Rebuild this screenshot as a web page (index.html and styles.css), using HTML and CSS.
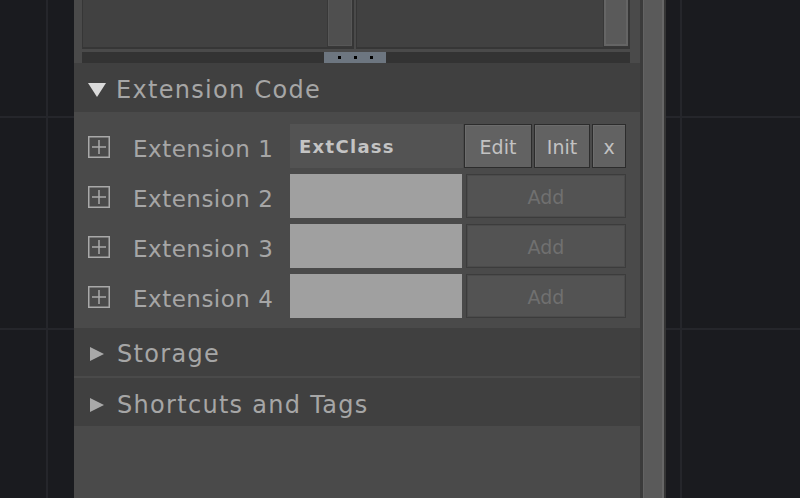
FILE: index.html
```html
<!DOCTYPE html>
<html lang="en">
<head>
    <meta charset="UTF-8">
    <title>Extension Code</title>
    <link rel="stylesheet" href="styles.css">
</head>
<body>

    <div class="panel">
        <div class="top">
            <div class="boxes">
                <div class="box box-a"><div class="thumb"></div></div>
                <div class="box box-b"><div class="thumb"></div></div>
            </div>
            <div class="splitter">
                <div class="grip"><span></span><span></span><span></span></div>
            </div>
        </div>

        <div class="section-head open"><span class="tri-down"></span>Extension Code</div>
        <div class="ext-list">
            <div class="ext-row">
                <svg class="plus" width="22" height="22" viewBox="0 0 22 22"><rect x="0.75" y="0.75" width="20.5" height="20.5" fill="none" stroke="#a9a9a9" stroke-width="1.5"/><path d="M4 11H18M11 4V18" stroke="#a9a9a9" stroke-width="1.5"/></svg>
                <span class="ext-label">Extension 1</span>
                <div class="ext-field filled">ExtClass</div>
                <button class="btn btn-edit">Edit</button>
                <button class="btn btn-init">Init</button>
                <button class="btn btn-x">x</button>
            </div>
            <div class="ext-row">
                <svg class="plus" width="22" height="22" viewBox="0 0 22 22"><rect x="0.75" y="0.75" width="20.5" height="20.5" fill="none" stroke="#a9a9a9" stroke-width="1.5"/><path d="M4 11H18M11 4V18" stroke="#a9a9a9" stroke-width="1.5"/></svg>
                <span class="ext-label">Extension 2</span>
                <div class="ext-field"></div>
                <button class="btn-add">Add</button>
            </div>
            <div class="ext-row">
                <svg class="plus" width="22" height="22" viewBox="0 0 22 22"><rect x="0.75" y="0.75" width="20.5" height="20.5" fill="none" stroke="#a9a9a9" stroke-width="1.5"/><path d="M4 11H18M11 4V18" stroke="#a9a9a9" stroke-width="1.5"/></svg>
                <span class="ext-label">Extension 3</span>
                <div class="ext-field"></div>
                <button class="btn-add">Add</button>
            </div>
            <div class="ext-row">
                <svg class="plus" width="22" height="22" viewBox="0 0 22 22"><rect x="0.75" y="0.75" width="20.5" height="20.5" fill="none" stroke="#a9a9a9" stroke-width="1.5"/><path d="M4 11H18M11 4V18" stroke="#a9a9a9" stroke-width="1.5"/></svg>
                <span class="ext-label">Extension 4</span>
                <div class="ext-field"></div>
                <button class="btn-add">Add</button>
            </div>
        </div>

        <div class="section-head sep"><span class="tri-right"></span>Storage</div>
        <div class="section-head"><span class="tri-right"></span>Shortcuts and Tags</div>
        <div class="rest"></div>
    </div>

    <div class="vscroll"></div>

</body>
</html>
```

FILE: styles.css
```css
:root {
    --bg: #1a1b1f;
    --grid: #25262b;
    --panel: #4a4a4a;
    --head: #404040;
    --text: #a6a6a6;
}

body {
    margin: 0;
    height: 498px;
    overflow: hidden;
    display: flex;
    font-family: 'DejaVu Sans', 'Liberation Sans', sans-serif;
    background:
        linear-gradient(var(--grid), var(--grid)) 46px 0 / 2px 100% no-repeat,
        linear-gradient(var(--grid), var(--grid)) 680px 0 / 2px 100% no-repeat,
        linear-gradient(var(--grid), var(--grid)) 0 116px / 100% 2px no-repeat,
        linear-gradient(var(--grid), var(--grid)) 0 328px / 100% 2px no-repeat,
        var(--bg);
}

.panel {
    margin-left: 74px;
    width: 566px;
    display: flex;
    flex-direction: column;
    background-color: var(--panel);
}

/* top text boxes (cut off by the window) */
.top {
    height: 63px;
    padding: 0 10px 0 8px;
    display: flex;
    flex-direction: column;
}

.boxes {
    display: flex;
    gap: 2px;
    height: 49px;
}

.box {
    background-color: #414141;
    border-left: 1px solid #363636;
    border-right: 2px solid #363636;
    border-bottom: 2px solid #363636;
    display: flex;
    justify-content: flex-end;
}

.box-a {
    width: 269px;
}

.box-b {
    flex: 1;
}

.thumb {
    border-left: 1px solid #383838;
    border-bottom: 1px solid #383838;
}

.box-a .thumb {
    width: 24px;
    background-color: #4f4f4f;
    box-shadow: inset 1px 0 #575757, inset -1px -1px #575757;
}

.box-b .thumb {
    width: 24px;
    background-color: #5a5a5a;
    box-shadow: inset 2px 0 #656565, inset -2px -2px #656565;
}

.splitter {
    margin-top: 3px;
    height: 11px;
    background-color: #333333;
    display: flex;
    justify-content: center;
}

.grip {
    width: 62px;
    background-color: #6d7680;
    display: flex;
    justify-content: center;
    align-items: center;
    gap: 13px;
    margin-left: -2px;
}

.grip span {
    width: 3px;
    height: 3px;
    background-color: #000;
}

/* collapsible section headers */
.section-head {
    box-sizing: border-box;
    height: 48px;
    padding-top: 5px;
    display: flex;
    align-items: center;
    background-color: var(--head);
    color: var(--text);
    font-size: 24px;
    letter-spacing: 1.3px;
}

.section-head.open {
    height: 49px;
    padding-top: 4px;
}

.section-head.sep {
    height: 50px;
    padding-bottom: 2px;
    border-bottom: 2px solid var(--panel);
}

.tri-down {
    width: 0;
    height: 0;
    margin: 0 10px 0 14px;
    border-left: 9.5px solid transparent;
    border-right: 9.5px solid transparent;
    border-top: 14px solid #dadada;
}

.tri-right {
    width: 0;
    height: 0;
    margin: 0 13px 0 16px;
    border-top: 7px solid transparent;
    border-bottom: 7px solid transparent;
    border-left: 14px solid #a9a9a9;
}

/* extension rows */
.ext-list {
    padding: 12px 0 10px 14px;
    display: flex;
    flex-direction: column;
    gap: 6px;
}

.ext-row {
    height: 44px;
    display: flex;
    align-items: center;
}

.plus {
    flex: none;
    margin: 2px 23px 0 0;
}

.ext-label {
    width: 157px;
    padding-top: 6px;
    color: var(--text);
    font-size: 23px;
    letter-spacing: 0.5px;
}

.ext-field {
    width: 172px;
    height: 44px;
    background-color: #a0a0a0;
}

.ext-field.filled {
    width: 173px;
    box-sizing: border-box;
    padding: 1px 0 0 9px;
    display: flex;
    align-items: center;
    background-color: #535353;
    color: #c4c4c4;
    font-weight: bold;
    font-size: 18px;
    letter-spacing: 1.3px;
}

.btn {
    height: 44px;
    margin-left: 2px;
    padding: 1px 0 0;
    border: 1px solid #2c2c2c;
    background-color: #626262;
    box-shadow: inset 1px 1px #6c6c6c;
    color: #c2c2c2;
    font-family: inherit;
    font-size: 19px;
}

.btn-edit {
    margin-left: 1px;
    width: 68px;
}

.btn-init {
    width: 56px;
}

.btn-x {
    width: 34px;
}

.btn-add {
    width: 160px;
    height: 44px;
    margin-left: 4px;
    padding: 1px 0 0;
    border: 1px solid #3c3c3c;
    background-color: #535353;
    box-shadow: inset 0 0 0 1px #4b4b4b;
    color: #707070;
    font-family: inherit;
    font-size: 19px;
}

.rest {
    flex: 1;
}

/* right scroll column */
.vscroll {
    width: 21px;
    border-left: 3px solid #3b3b3b;
    border-right: 2px solid #353535;
    background-color: #5a5a5a;
    box-shadow: inset 1px 0 #636363, inset -2px 0 #676767;
}
```
